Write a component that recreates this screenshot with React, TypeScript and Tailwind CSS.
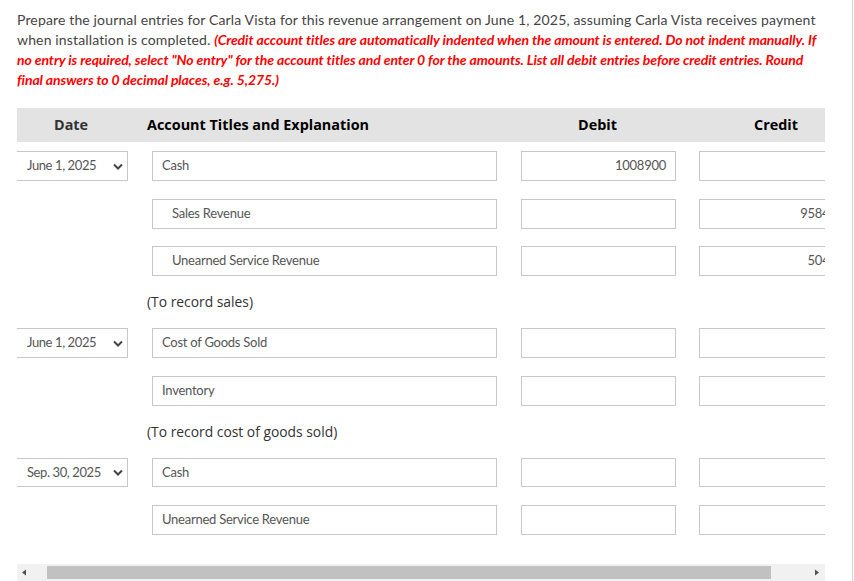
const rows: any[] = [
  { date: 'June 1, 2025', title: 'Cash', debit: '1008900', gap: 'mt-0' },
  { title: 'Sales Revenue', indent: true, credit: '958455', gap: 'mt-[18px]' },
  { title: 'Unearned Service Revenue', indent: true, credit: '50445', gap: 'mt-[17px]' },
  { note: '(To record sales)', h: 'h-[52px]' },
  { date: 'June 1, 2025', title: 'Cost of Goods Sold', gap: 'mt-0' },
  { title: 'Inventory', gap: 'mt-[18px]' },
  { note: '(To record cost of goods sold)', h: 'h-[52px]' },
  { date: 'Sep. 30, 2025', title: 'Cash', gap: 'mt-0', short: true },
  { title: 'Unearned Service Revenue', gap: 'mt-[18px]' },
];

function Field({ value, className, right }: { value?: string; className: string; right?: boolean }) {
  return (
    <div
      className={`flex shrink-0 items-center overflow-hidden border border-[#c8c8c8] text-[13px] tracking-[-0.25px] text-[#555] ${right ? 'justify-end pr-[9px]' : 'pl-[9px]'} ${className}`}
    >
      <span className="whitespace-nowrap">{value}</span>
    </div>
  );
}

export default function App() {
  return (
    <div className="relative h-[581px] w-[854px] overflow-hidden bg-white font-['Lato',sans-serif]">
      <div className="w-[825px] pl-[17px] pt-[10px]">
        <p className="w-[803px] text-[14px] leading-[20px] tracking-[0.145px] text-[#444]">
          Prepare the journal entries for Carla Vista for this revenue arrangement on June 1, 2025, assuming Carla Vista
          receives payment when installation is completed.{' '}
          <em className="font-bold tracking-[-0.08px] text-[#f00]">
            (Credit account titles are automatically indented when the amount is entered. Do not indent manually. If no
            entry is required, select "No entry" for the account titles and enter 0 for the amounts. List all debit
            entries before credit entries. Round final answers to 0 decimal places, e.g. 5,275.)
          </em>
        </p>
        <div className="mt-[18px] flex h-[34px] items-center bg-[#e3e3e3] font-['Open_Sans',sans-serif] text-[14.4px] font-bold text-black">
          <div className="w-[130px] pl-[37px] text-[#333]">Date</div>
          <div className="w-[374px]">Account Titles and Explanation</div>
          <div className="w-[178px] pl-[57px]">Debit</div>
          <div className="pl-[55px]">Credit</div>
        </div>
        <div className="mt-[9px] overflow-hidden">
          {rows.map((r, i) =>
            r.note ? (
              <div key={i} className={`flex items-center pl-[130px] font-['Open_Sans',sans-serif] text-[13.85px] text-[#333] ${r.h}`}>
                {r.note}
              </div>
            ) : (
              <div key={i} className={`flex ${r.short ? 'h-[29px]' : 'h-[30px]'} ${r.gap}`}>
                {r.date ? (
                  <div className="flex w-[111px] shrink-0 items-center justify-between border border-l-0 border-[#c8c8c8] pl-[10px] pr-[4px] text-[13px] tracking-[-0.4px] text-[#555]">
                    <span className="whitespace-nowrap">{r.date}</span>
                    <svg width="10" height="7" viewBox="0 0 10 7" className="shrink-0 text-[#444]">
                      <path d="M1 1.5 5 5.5 9 1.5" fill="none" stroke="currentColor" strokeWidth="2" />
                    </svg>
                  </div>
                ) : (
                  <div className="w-[111px] shrink-0" />
                )}
                <Field value={r.title} className={`ml-[24px] w-[345px] ${r.indent ? 'pl-[19px]' : ''}`} />
                <Field value={r.debit} right className="ml-[24px] w-[155px]" />
                <Field value={r.credit} right className="ml-[23px] w-[155px]" />
              </div>
            ),
          )}
        </div>
        <div className="mt-[29px] flex h-[17px] items-center justify-between bg-[#f1f1f1]">
          <svg width="30" height="17" viewBox="0 0 30 17" className="shrink-0">
            <path d="M5 8.5 9 5.5V11.5Z" fill="#505050" />
          </svg>
          <div className="h-[13px] w-[724px] shrink-0 bg-[#c1c1c1]" />
          <svg width="54" height="17" viewBox="0 0 54 17" className="shrink-0">
            <path d="M48 8.5 44 5.5V11.5Z" fill="#505050" />
          </svg>
        </div>
      </div>
      <div className="absolute right-[1px] top-0 h-full w-px bg-[#d4d4d4]" />
    </div>
  );
}
